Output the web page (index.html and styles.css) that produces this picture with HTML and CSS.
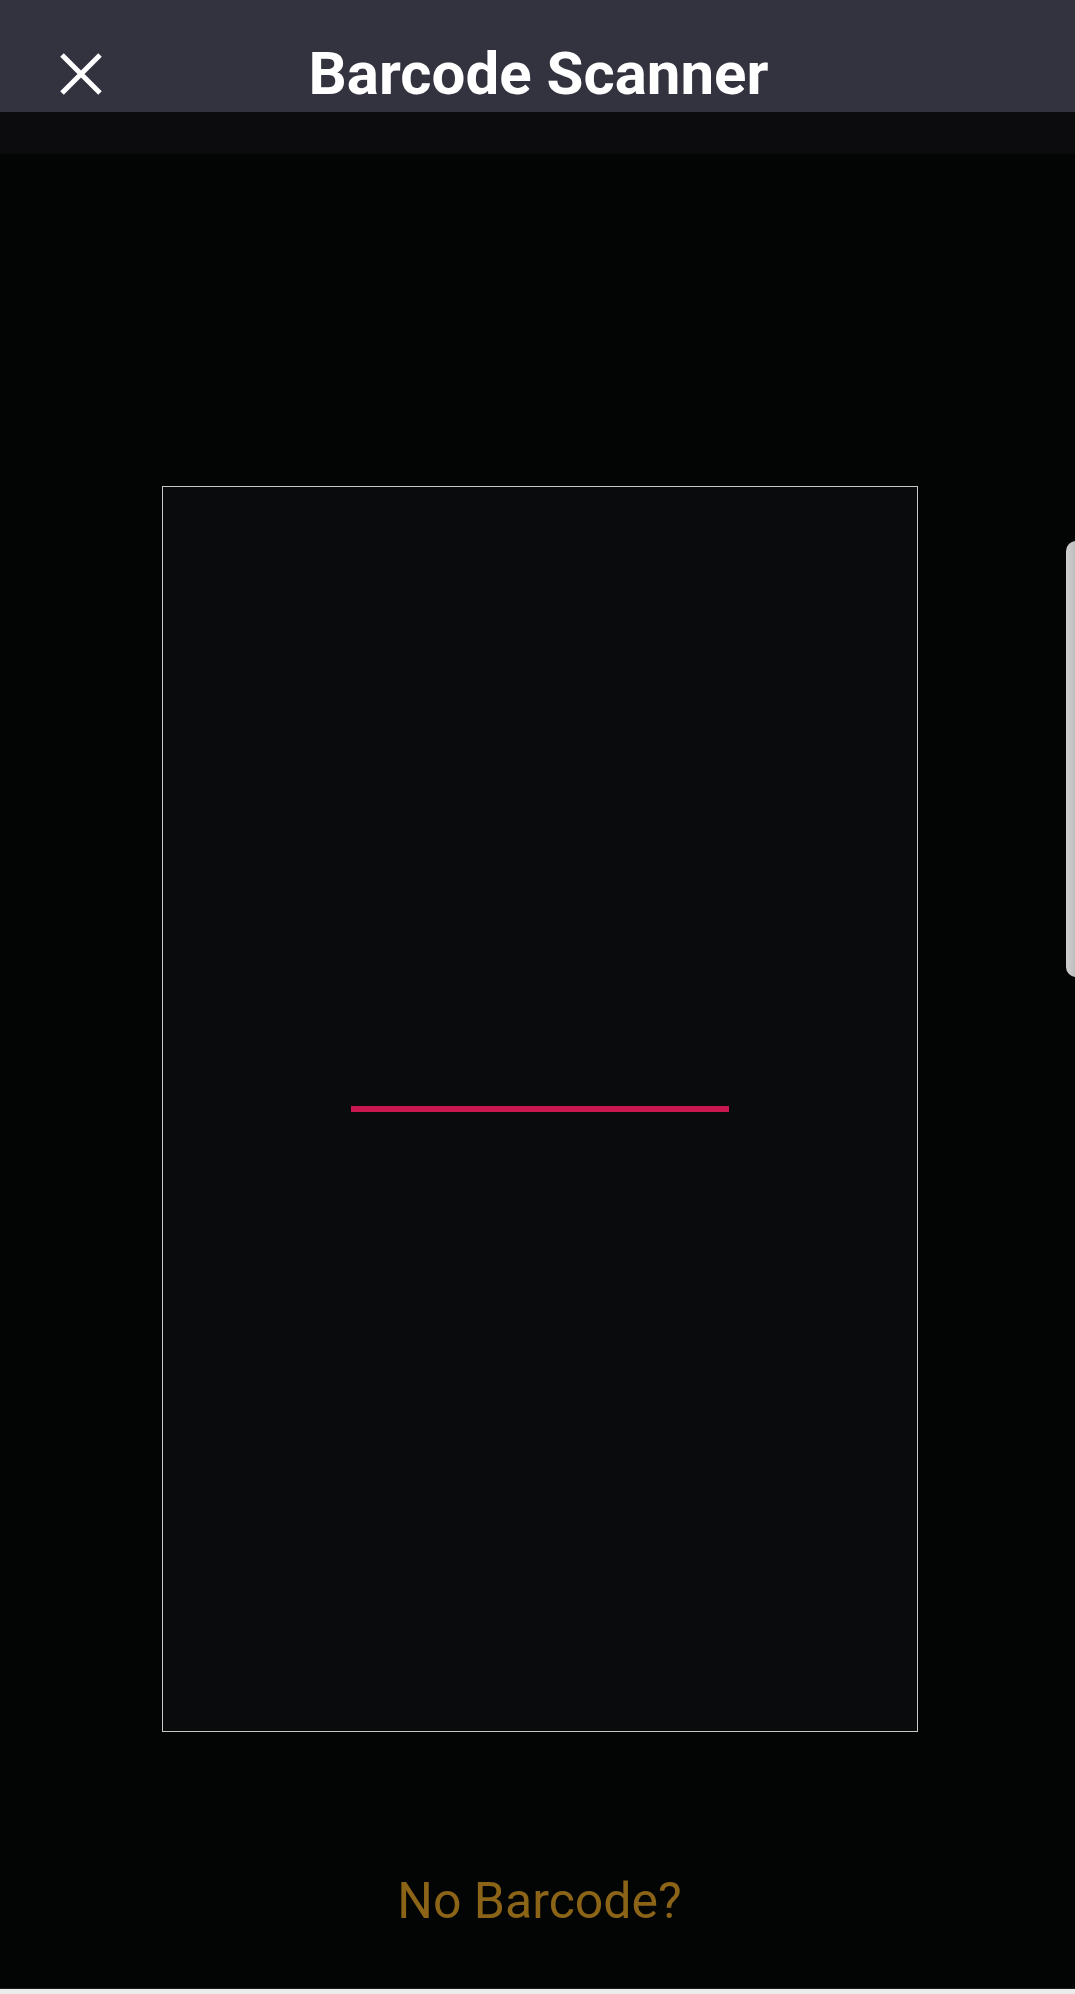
FILE: index.html
```html
<!DOCTYPE html>
<html>
<head>
<meta charset="utf-8">
<link rel="stylesheet" href="styles.css">
</head>
<body>
<div class="screen">
  <header class="topbar">
    <button class="close" aria-label="Close">
      <svg width="42" height="42" viewBox="0 0 42 42"><path d="M2 2 L40 40 M40 2 L2 40" stroke="#ffffff" stroke-width="5" stroke-linecap="butt" fill="none"/></svg>
    </button>
    <h1 class="title">Barcode Scanner</h1>
  </header>
  <div class="band"></div>
  <main class="camera">
    <div class="frame">
      <div class="laser"></div>
    </div>
    <div class="nobarcode">No Barcode?</div>
  </main>
  <div class="footer-strip"></div>
  <div class="edge-handle"></div>
</div>
</body>
</html>
```
FILE: styles.css
```css
html, body {
  margin: 0;
  padding: 0;
  background: #030404;
}
.screen {
  position: relative;
  width: 1075px;
  height: 1994px;
  overflow: hidden;
  background: #030404;
  font-family: Roboto, "Liberation Sans", sans-serif;
}
.topbar {
  position: relative;
  height: 112px;
  background: #32333f;
  display: flex;
  align-items: center;
  justify-content: center;
}
.close {
  position: absolute;
  left: 60px;
  top: 53px;
  width: 42px;
  height: 42px;
  padding: 0;
  border: 0;
  background: transparent;
  display: block;
}
.close svg { display: block; }
.title {
  margin: 0;
  color: #ffffff;
  font-weight: 700;
  font-size: 60px;
  line-height: 1;
  padding-top: 35px;
  padding-left: 2px;
  letter-spacing: 0;
}
.band {
  height: 42px;
  background: #0c0c0f;
}
.camera {
  height: 1832px;
  display: flex;
  flex-direction: column;
}
.frame {
  margin-top: 332px;
  margin-left: 162px;
  width: 754px;
  height: 1244px;
  border: 1px solid #c8c8c8;
  background: #0a0b0d;
  display: flex;
  align-items: center;
  justify-content: center;
}
.laser {
  width: 378px;
  height: 6px;
  background: #c8184f;
}
.nobarcode {
  margin-top: 139px;
  text-align: center;
  color: #8b6417;
  font-size: 50px;
  line-height: 60px;
  padding-left: 4px;
}
.footer-strip {
  position: absolute;
  left: 0;
  right: 0;
  bottom: 0;
  height: 5px;
  background: #ececec;
  border-top: 1px solid #1a1a1a;
}
.edge-handle {
  position: absolute;
  left: 1066px;
  top: 541px;
  width: 20px;
  height: 436px;
  border-radius: 10px;
  background: linear-gradient(90deg, #d0d0d0, #a8a8a8);
}
```
